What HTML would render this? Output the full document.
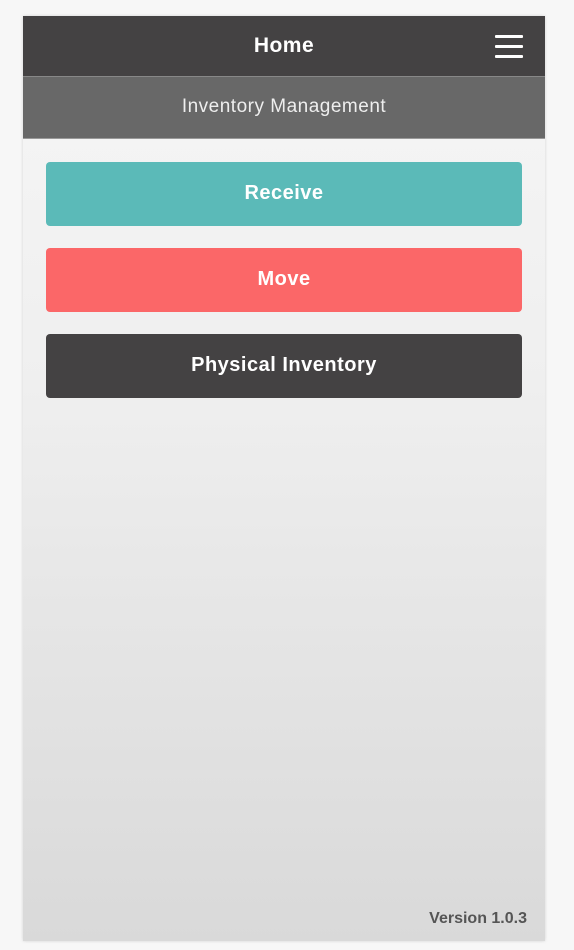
<!DOCTYPE html>
<html><head><style>
html,body{margin:0;padding:0;width:574px;height:950px;background:#f7f7f7;overflow:hidden;font-family:"Liberation Sans",sans-serif}
.frame{position:absolute;left:23px;top:16px;width:522px;height:925px;background:linear-gradient(#f6f6f6 0%,#efefef 40%,#d9d9d9 100%);box-shadow:0 0 3px rgba(0,0,0,.15)}
.hdr{position:absolute;left:0;top:0;width:522px;height:60px;background:#444243;color:#fff;font-weight:bold;font-size:21px;letter-spacing:.5px;text-align:center;line-height:60px;border-bottom:1px solid #888}
.sub{position:absolute;left:0;top:61px;width:522px;height:61px;background:#686868;color:#eee;font-size:19px;letter-spacing:.5px;text-align:center;line-height:59px;border-bottom:1px solid #999}
.burger{position:absolute;right:22px;top:19px;width:28px}
.burger i{display:block;height:3px;background:#fff;margin-bottom:7px;border-radius:1px}
.btn{position:absolute;left:23px;width:476px;height:64px;border-radius:4px;color:#fff;font-weight:bold;font-size:20px;letter-spacing:.5px;text-align:center;line-height:62px}
.ver{position:absolute;right:18px;top:894px;font-size:16px;font-weight:bold;color:#555}
</style></head><body>
<div class="frame">
<div class="hdr">Home<div class="burger"><i></i><i></i><i></i></div></div>
<div class="sub">Inventory Management</div>
<div class="btn" style="top:146px;background:#5bbab8">Receive</div>
<div class="btn" style="top:232px;background:#fb6768">Move</div>
<div class="btn" style="top:318px;background:#444243">Physical Inventory</div>
<div class="ver">Version 1.0.3</div>
</div>
</body></html>
